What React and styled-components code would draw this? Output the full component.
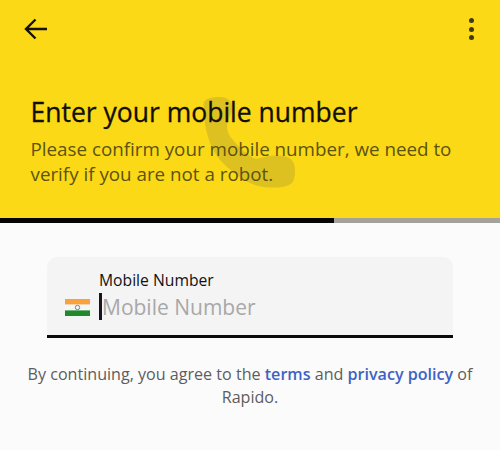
import React from 'react';
import styled, { createGlobalStyle } from 'styled-components';

const GlobalStyle = createGlobalStyle`
  html, body {
    margin: 0;
    padding: 0;
    background: #fbfbfb;
  }
  body {
    font-family: "Open Sans", Roboto, sans-serif;
  }
`;

const App = () => (
  <>
    <GlobalStyle />
    <Page>
      <Header>
        <TopBar>
          <svg width="24" height="22" viewBox="0 0 24 22" fill="none" stroke="#141204" strokeWidth="2.4">
            <path d="M23 11H2M11.5 1.5L2 11l9.5 9.5" />
          </svg>
          <Dots>
            <i /><i /><i />
          </Dots>
        </TopBar>
        <Intro>
          <PhoneMark viewBox="0 0 95 91" aria-hidden="true">
            <path d="M1 5C3 1 10 0 17 0c8 0 12 4 12 11 0 6-5 11-5 18 0 5 2 10 6 14 6 7 12 13 20 18 5 2 10-1 16-2 7-1 17-1 22 3 4 4 5 12 3 20-1 5-6 7-12 8-9 1-18 1-27-2-11-4-22-12-32-22C10 57 4 41 2 26 1 18 0 10 1 5z" />
          </PhoneMark>
          <Title>Enter your mobile number</Title>
          <Subtitle>Please confirm your mobile number, we need to verify if you are not a robot.</Subtitle>
        </Intro>
      </Header>
      <Progress>
        <ProgressFill $value={66.8} />
      </Progress>
      <Form>
        <Field>
          <Flag>
            <svg width="25" height="17" viewBox="0 0 25 17">
              <rect width="25" height="5.6" fill="#f9a13c" />
              <rect y="5.6" width="25" height="5.8" fill="#f6f6f4" />
              <rect y="11.4" width="25" height="5.6" fill="#1f8a2c" />
              <circle cx="12.5" cy="8.5" r="2.2" fill="none" stroke="#7c7f96" strokeWidth="1" />
            </svg>
          </Flag>
          <FieldBody>
            <FieldLabel>Mobile Number</FieldLabel>
            <InputLine>
              <Caret />
              <Placeholder>Mobile Number</Placeholder>
            </InputLine>
          </FieldBody>
        </Field>
        <Terms>
          By continuing, you agree to the <TermsLink>terms</TermsLink> and <TermsLink>privacy policy</TermsLink> of Rapido.
        </Terms>
      </Form>
    </Page>
  </>
);

const Page = styled.div`
  width: 500px;
  height: 450px;
  overflow: hidden;
  background: #fbfbfb;
`;

const Header = styled.header`
  height: 218px;
  box-sizing: border-box;
  background: #fbd916;
  padding: 18px 20px 0 24px;
`;

const TopBar = styled.div`
  height: 22px;
  display: flex;
  align-items: center;
  justify-content: space-between;
`;

const Dots = styled.div`
  display: flex;
  flex-direction: column;
  gap: 3.5px;
  margin-right: 6px;

  i {
    display: block;
    width: 5px;
    height: 5px;
    border-radius: 50%;
    background: #3f3a12;
  }
`;

const Intro = styled.div`
  position: relative;
  margin-top: 54px;
  padding-left: 6.5px;
`;

const PhoneMark = styled.svg`
  position: absolute;
  left: 179px;
  top: 3px;
  width: 95px;
  height: 91px;
  fill: rgba(80, 80, 90, 0.17);
`;

const Title = styled.h1`
  position: relative;
  margin: 0;
  font-size: 26.5px;
  line-height: 36px;
  font-weight: 400;
  color: #120f02;
  -webkit-text-stroke: 0.3px #120f02;
`;

const Subtitle = styled.p`
  position: relative;
  margin: 7px 0 0;
  width: 440px;
  font-size: 18.8px;
  line-height: 24.5px;
  color: #5b5311;
`;

const Progress = styled.div`
  height: 5px;
  background: #a3a39b;
`;

const ProgressFill = styled.div`
  height: 100%;
  width: ${({ $value }) => $value}%;
  background: #050505;
`;

const Form = styled.main`
  padding: 34px 47px 0;
`;

const Field = styled.div`
  height: 81px;
  box-sizing: border-box;
  padding: 0 18px;
  display: flex;
  align-items: flex-end;
  gap: 9px;
  background: #f4f4f4;
  border-radius: 10px 10px 0 0;
  border-bottom: 3px solid #0a0a0a;
`;

const Flag = styled.div`
  display: flex;
  margin-bottom: 19px;
`;

const FieldBody = styled.div`
  padding-bottom: 15px;
`;

const FieldLabel = styled.div`
  font-size: 15.7px;
  line-height: 20px;
  color: #111;
  margin-bottom: 3px;
`;

const InputLine = styled.div`
  display: flex;
  align-items: center;
  height: 27px;
`;

const Caret = styled.span`
  width: 3px;
  height: 27px;
  background: #16161e;
`;

const Placeholder = styled.span`
  font-size: 21px;
  color: #a8a8a8;
`;

const Terms = styled.p`
  margin: 25px -20px 0;
  font-size: 16.1px;
  line-height: 23px;
  text-align: center;
  color: #5d5d5d;
`;

const TermsLink = styled.span`
  color: #3d63c4;
  font-weight: 600;
`;

export default App;
